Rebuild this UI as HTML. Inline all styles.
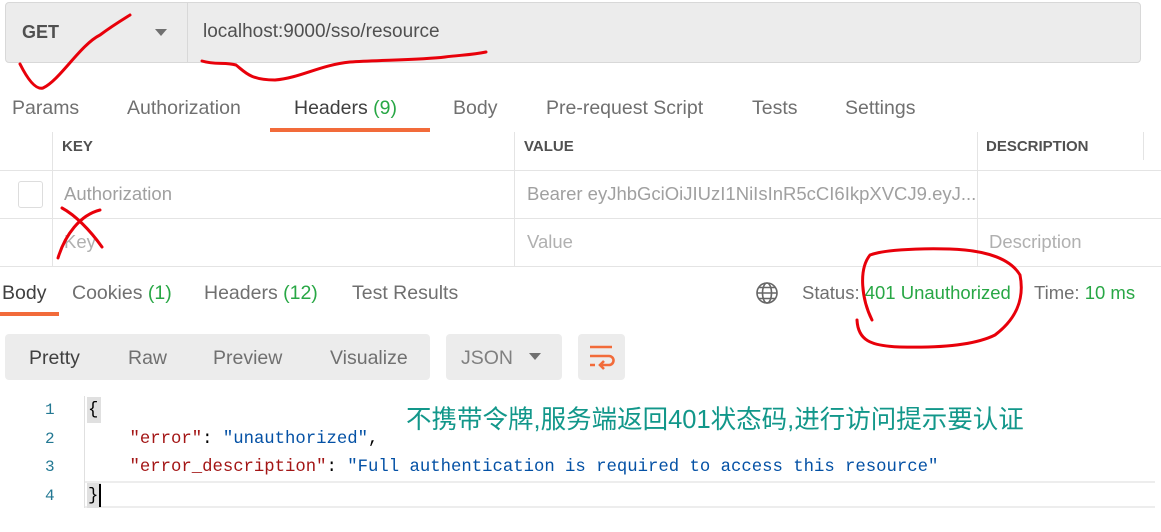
<!DOCTYPE html>
<html><head><meta charset="utf-8"><style>
*{margin:0;padding:0;box-sizing:border-box}
body{width:1161px;height:532px;background:#fff;position:relative;overflow:hidden;font-family:"Liberation Sans","Noto Sans CJK SC",sans-serif;color:#505050}
.a{position:absolute;white-space:nowrap}
.g{color:#28a745}
.mono{font-family:"Liberation Mono",monospace;font-size:17.3px}
</style></head><body>
<div class="a" style="left:5px;top:2px;width:1136px;height:61px;background:#ececec;border:1px solid #d8d8d8;border-radius:4px"></div>
<div class="a" style="left:187px;top:3px;width:1px;height:59px;background:#d8d8d8"></div>
<div class="a" style="left:22px;top:22px;font-size:18px;font-weight:bold;color:#505050">GET</div>
<div class="a" style="left:155px;top:29px;width:0;height:0;border-left:6px solid transparent;border-right:6px solid transparent;border-top:7px solid #707070"></div>
<div class="a" style="left:203px;top:21px;font-size:19px;color:#505050">localhost:9000/sso/resource</div>

<div class="a" style="top:97px;left:12px;font-size:19.5px;color:#707070">Params</div>
<div class="a" style="top:97px;left:127px;font-size:19.5px;color:#707070">Authorization</div>
<div class="a" style="top:97px;left:294px;font-size:19.5px;color:#404040">Headers <span class="g">(9)</span></div>
<div class="a" style="top:97px;left:453px;font-size:19.5px;color:#707070">Body</div>
<div class="a" style="top:97px;left:546px;font-size:19.5px;color:#707070">Pre-request Script</div>
<div class="a" style="top:97px;left:752px;font-size:19.5px;color:#707070">Tests</div>
<div class="a" style="top:97px;left:845px;font-size:19.5px;color:#707070">Settings</div>
<div class="a" style="left:270px;top:128px;width:160px;height:4px;background:#f26b3a"></div>

<div class="a" style="left:0;top:170px;width:1161px;height:1px;background:#e4e4e4"></div>
<div class="a" style="left:0;top:218px;width:1161px;height:1px;background:#e4e4e4"></div>
<div class="a" style="left:0;top:266px;width:1161px;height:1px;background:#e4e4e4"></div>
<div class="a" style="left:52px;top:132px;width:1px;height:134px;background:#e4e4e4"></div>
<div class="a" style="left:514px;top:132px;width:1px;height:134px;background:#e4e4e4"></div>
<div class="a" style="left:977px;top:132px;width:1px;height:134px;background:#e4e4e4"></div>
<div class="a" style="left:1143px;top:132px;width:1px;height:28px;background:#e4e4e4"></div>
<div class="a" style="left:62px;top:138px;font-size:15px;font-weight:bold;color:#505050">KEY</div>
<div class="a" style="left:524px;top:138px;font-size:15px;font-weight:bold;color:#505050">VALUE</div>
<div class="a" style="left:986px;top:138px;font-size:15px;font-weight:bold;color:#505050">DESCRIPTION</div>
<div class="a" style="left:18px;top:181px;width:25px;height:27px;border:1px solid #ddd;border-radius:3px"></div>
<div class="a" style="left:64px;top:183px;font-size:18.5px;color:#a0a0a0">Authorization</div>
<div class="a" style="left:527px;top:183px;font-size:18.5px;color:#a0a0a0">Bearer eyJhbGciOiJIUzI1NiIsInR5cCI6IkpXVCJ9.eyJ...</div>
<div class="a" style="left:64px;top:231px;font-size:18.5px;color:#b0b0b0">Key</div>
<div class="a" style="left:527px;top:231px;font-size:18.5px;color:#b0b0b0">Value</div>
<div class="a" style="left:989px;top:231px;font-size:18.5px;color:#b0b0b0">Description</div>

<div class="a" style="top:282px;left:2px;font-size:19.5px;color:#404040">Body</div>
<div class="a" style="top:282px;left:72px;font-size:19.5px;color:#707070">Cookies <span class="g">(1)</span></div>
<div class="a" style="top:282px;left:204px;font-size:19.5px;color:#707070">Headers <span class="g">(12)</span></div>
<div class="a" style="top:282px;left:352px;font-size:19.5px;color:#707070">Test Results</div>
<div class="a" style="left:0;top:312px;width:59px;height:4px;background:#f26b3a"></div>
<svg class="a" style="left:755px;top:281px" width="24" height="24" viewBox="0 0 24 24" fill="none" stroke="#666" stroke-width="1.6"><circle cx="12" cy="12" r="10"/><ellipse cx="12" cy="12" rx="4.5" ry="10"/><path d="M2 12h20M4 6.5h16M4 17.5h16"/></svg>
<div class="a" style="top:282px;left:802px;font-size:18.5px;color:#707070">Status: <span class="g">401 Unauthorized</span></div>
<div class="a" style="top:282px;left:1034px;font-size:18.5px;color:#707070">Time: <span class="g">10 ms</span></div>

<div class="a" style="left:5px;top:334px;width:425px;height:46px;background:#ececec;border-radius:4px"></div>
<div class="a" style="left:29px;top:347px;font-size:19.5px;color:#404040">Pretty</div>
<div class="a" style="left:128px;top:347px;font-size:19.5px;color:#707070">Raw</div>
<div class="a" style="left:213px;top:347px;font-size:19.5px;color:#707070">Preview</div>
<div class="a" style="left:330px;top:347px;font-size:19.5px;color:#707070">Visualize</div>
<div class="a" style="left:446px;top:334px;width:116px;height:46px;background:#ececec;border-radius:4px"></div>
<div class="a" style="left:461px;top:347px;font-size:19.5px;color:#808080">JSON</div>
<div class="a" style="left:529px;top:353px;width:0;height:0;border-left:6px solid transparent;border-right:6px solid transparent;border-top:7px solid #707070"></div>
<div class="a" style="left:578px;top:334px;width:47px;height:46px;background:#ececec;border-radius:4px"></div>
<svg class="a" style="left:588px;top:343px" width="28" height="28" viewBox="0 0 28 28" fill="none" stroke="#f26b3a" stroke-width="2.6"><path d="M2 4h22M2 13h19a4 4 0 0 1 0 9h-8M16 18l-4 4 4 4M2 22h5"/></svg>

<div class="a" style="left:84px;top:481px;width:1071px;height:27px;border-top:2px solid #ededed;border-bottom:2px solid #ededed"></div>
<div class="a" style="left:84px;top:396px;width:1px;height:112px;background:#e0e0e0"></div>
<div class="a mono" style="left:45px;top:396px;color:#237893;line-height:28.5px;font-size:16px">1<br>2<br>3<br>4</div>
<div class="a" style="left:87px;top:397px;width:14px;height:26px;background:#e0e0e0"></div>
<div class="a" style="left:87px;top:483px;width:14px;height:25px;background:#e0e0e0"></div>
<div class="a" style="left:99px;top:484px;width:2px;height:23px;background:#000"></div>
<div class="a mono" style="left:88px;top:397px;line-height:28.5px;color:#000">{<br>&nbsp;&nbsp;&nbsp;&nbsp;<span style="color:#a31515">"error"</span>: <span style="color:#0451a5">"unauthorized"</span>,<br>&nbsp;&nbsp;&nbsp;&nbsp;<span style="color:#a31515">"error_description"</span>: <span style="color:#0451a5">"Full authentication is required to access this resource"</span><br>}</div>
<div class="a" style="left:406px;top:399px;font-size:25.5px;color:#12978a;font-family:'Liberation Sans','Noto Sans CJK SC',sans-serif">不携带令牌,服务端返回401状态码,进行访问提示要认证</div>

<svg class="a" style="left:0;top:0" width="1161" height="532" fill="none" stroke="#e8000a" stroke-width="3" stroke-linecap="round">
<path d="M20 64C28 80 36 90 43 88C60 80 80 45 100 35C112 26 122 20 130 15"/>
<path d="M202 61C215 65 225 62 236 65C245 72 250 80 275 80C300 78 320 65 350 62C380 60 420 60 445 57C460 55 472 55 486 52"/>
<path d="M62 208C75 215 90 230 102 247M100 210C80 215 65 235 58 258"/>
<path d="M872 320C862 300 858 270 870 255C890 248 940 248 965 250C985 252 1010 258 1020 275C1025 300 1015 320 995 335C975 345 940 348 900 347C870 346 858 340 857 320"/>
</svg>
</body></html>
